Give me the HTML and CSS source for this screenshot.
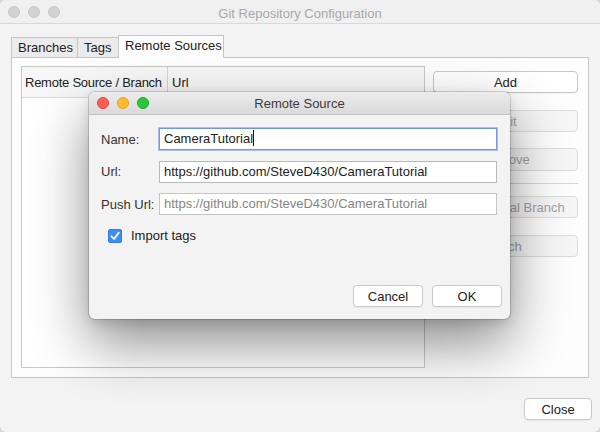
FILE: index.html
```html
<!DOCTYPE html>
<html>
<head>
<meta charset="utf-8">
<link rel="stylesheet" href="styles.css">
</head>
<body>
<div class="window">
  <div class="titlebar">
    <div class="lights">
      <span class="light inactive"></span>
      <span class="light inactive"></span>
      <span class="light inactive"></span>
    </div>
    <div class="title">Git Repository Configuration</div>
  </div>
  <div class="main">
    <div class="tabs">
      <div class="tab tab-branches">Branches</div>
      <div class="tab tab-tags">Tags</div>
      <div class="tab tab-remote active">Remote Sources</div>
    </div>
    <div class="panel">
      <div class="table">
        <div class="thead">
          <div class="th c1">Remote Source / Branch</div>
          <div class="th c2">Url</div>
        </div>
        <div class="tbody"></div>
      </div>
      <div class="actions">
        <button class="btn btn-add">Add</button>
        <button class="btn disabled btn-edit">Edit</button>
        <button class="btn disabled btn-remove">Remove</button>
        <div class="sep"></div>
        <button class="btn disabled btn-local">Create Local Branch</button>
        <button class="btn disabled btn-fetch">Fetch</button>
      </div>
    </div>
    <div class="footer">
      <button class="btn btn-close">Close</button>
    </div>
  </div>

  <div class="dialog">
    <div class="dtitlebar">
      <div class="lights dlights">
        <span class="light red"></span>
        <span class="light yellow"></span>
        <span class="light green"></span>
      </div>
      <div class="dtitle">Remote Source</div>
    </div>
    <div class="dbody">
      <div class="form">
        <label class="lbl">Name:</label>
        <div class="field focus">CameraTutorial<span class="caret"></span></div>
        <label class="lbl">Url:</label>
        <div class="field">https://github.com/SteveD430/CameraTutorial</div>
        <label class="lbl">Push Url:</label>
        <div class="field muted">https://github.com/SteveD430/CameraTutorial</div>
      </div>
      <div class="check-row">
        <span class="checkbox">
          <svg width="14" height="14" viewBox="0 0 14 14"><path d="M3.4 7.3 L6 10 L10.8 3.6" fill="none" stroke="#fff" stroke-width="1.8" stroke-linecap="round" stroke-linejoin="round"/></svg>
        </span>
        <span class="check-label">Import tags</span>
      </div>
      <div class="dfooter">
        <button class="btn dbtn">Cancel</button>
        <button class="btn dbtn">OK</button>
      </div>
    </div>
  </div>
</div>
</body>
</html>
```

FILE: styles.css
```css
html, body {
  margin: 0;
  padding: 0;
  background: #d6d6d6;
}
body {
  width: 600px;
  height: 432px;
  overflow: hidden;
  font-family: "Liberation Sans", Arial, sans-serif;
  font-size: 13px;
  color: #222;
}
.window {
  position: relative;
  width: 600px;
  height: 432px;
  background: #f3f3f3;
  border-radius: 6px;
  overflow: hidden;
}
.titlebar {
  height: 23px;
  border-bottom: 1px solid #d9d9d9;
  background: #f0f0f0;
  display: flex;
  align-items: center;
  position: relative;
}
.lights {
  display: flex;
  gap: 8px;
  padding-left: 8px;
}
.light {
  display: block;
  width: 12px;
  height: 12px;
  border-radius: 50%;
  box-sizing: border-box;
}
.light.inactive {
  background: #d3d3d3;
  border: 1px solid #c9c9c9;
}
.light.red { background: #fd5f57; border: 1px solid #e0443e; }
.light.yellow { background: #febc2e; border: 1px solid #dea123; }
.light.green { background: #29c740; border: 1px solid #1aab29; }
.title {
  flex: 1;
  text-align: center;
  color: #a9a9a9;
  margin-left: -60px;
  padding-top: 3px;
}
.main {
  padding: 11px 11px 0 11px;
}
.tabs {
  display: flex;
  align-items: flex-end;
  height: 22px;
}
.tab {
  box-sizing: border-box;
  height: 20px;
  border: 1px solid #c6c6c6;
  border-bottom: none;
  border-right: none;
  background: #ebebeb;
  padding-left: 6px;
  line-height: 19px;
  color: #222;
  white-space: nowrap;
}
.tab-branches { width: 66px; }
.tab-tags { width: 41px; }
.tab-remote { width: 106px; }
.tab.active {
  height: 23px;
  margin-bottom: -1px;
  background: #fdfdfd;
  border-right: 1px solid #c6c6c6;
  position: relative;
  z-index: 1;
  padding-left: 6px;
  line-height: 20px;
}
.panel {
  box-sizing: border-box;
  height: 321px;
  border: 1px solid #c6c6c6;
  background: #fdfdfd;
  display: flex;
  gap: 8px;
  padding: 8px 10px 9px 9px;
}
.table {
  width: 404px;
  box-sizing: border-box;
  border: 1px solid #c8c8c8;
  background: #fff;
  display: flex;
  flex-direction: column;
}
.thead {
  display: flex;
  height: 30px;
  background: #f7f7f7;
  border-bottom: 1px solid #dcdcdc;
}
.th {
  box-sizing: border-box;
  padding-top: 8px;
  line-height: 16px;
  white-space: nowrap;
}
.th.c1 {
  width: 146px;
  padding-left: 3px;
  border-right: 1px solid #d4d4d4;
  letter-spacing: -0.25px;
}
.th.c2 {
  padding-left: 4px;
}
.tbody { flex: 1; }
.actions {
  width: 145px;
  display: flex;
  flex-direction: column;
  padding-top: 5px;
}
.btn {
  box-sizing: border-box;
  height: 22px;
  border: 1px solid #c9c9c9;
  border-radius: 4px;
  background: #fff;
  font-family: inherit;
  font-size: 13px;
  color: #222;
  padding: 0;
  white-space: nowrap;
  box-shadow: 0 1px 0 rgba(0,0,0,0.04);
}
.btn.disabled {
  background: #f6f6f6;
  border-color: #dcdcdc;
  color: #a2a2a2;
  box-shadow: none;
}
.btn-edit { margin-top: 17px; }
.btn-remove { margin-top: 16px; height: 23px; }
.sep {
  height: 1px;
  background: #d6d6d6;
  margin-top: 12px;
}
.btn-local { margin-top: 12px; }
.btn-fetch { margin-top: 17px; }
.footer {
  display: flex;
  justify-content: flex-end;
  margin-right: -3px;
  margin-top: 20px;
}
.btn-close {
  width: 68px;
}

/* dialog */
.dialog {
  position: absolute;
  left: 89px;
  top: 92px;
  width: 421px;
  height: 227px;
  background: #f3f3f3;
  border-radius: 6px;
  box-shadow: 0 0 0 1px rgba(0,0,0,0.15), 0 24px 56px rgba(0,0,0,0.45), 0 4px 12px rgba(0,0,0,0.12);
  display: flex;
  flex-direction: column;
  overflow: hidden;
  z-index: 5;
}
.dtitlebar {
  box-sizing: border-box;
  height: 23px;
  background: linear-gradient(#ececec, #dadada);
  border-bottom: 1px solid #c4c4c4;
  display: flex;
  align-items: center;
}
.dlights {
  padding-left: 8px;
}
.dtitle {
  flex: 1;
  text-align: center;
  color: #3c3c3c;
  margin-left: -60px;
  padding-top: 1px;
}
.dbody {
  flex: 1;
  display: flex;
  flex-direction: column;
  padding: 13px 13px 12px 12px;
}
.form {
  display: grid;
  grid-template-columns: 58px 1fr;
  row-gap: 10.5px;
  align-items: center;
}
.lbl {
  color: #333;
  white-space: nowrap;
}
.field {
  box-sizing: border-box;
  height: 22px;
  border: 1px solid #b9b9b9;
  background: #fff;
  padding-left: 4px;
  line-height: 20px;
  color: #222;
  white-space: nowrap;
  overflow: hidden;
}
.field.focus {
  border-color: #6f97e4;
  box-shadow: 0 0 0 1px #a9c2f2;
}
.field.muted {
  color: #858585;
  border-color: #c6c6c6;
}
.caret {
  display: inline-block;
  width: 1px;
  height: 16px;
  background: #111;
  vertical-align: -3px;
}
.check-row {
  display: flex;
  align-items: center;
  margin-top: 13px;
  margin-left: 7px;
  gap: 9px;
}
.checkbox {
  display: flex;
  width: 14px;
  height: 14px;
  border-radius: 3px;
  background: #3a8ef6;
  box-shadow: inset 0 0 0 1px #2f7de6;
}
.check-label {
  color: #222;
}
.dfooter {
  margin-top: auto;
  display: flex;
  justify-content: flex-end;
  gap: 9px;
  margin-right: -5px;
}
.dbtn {
  width: 70px;
}
```
